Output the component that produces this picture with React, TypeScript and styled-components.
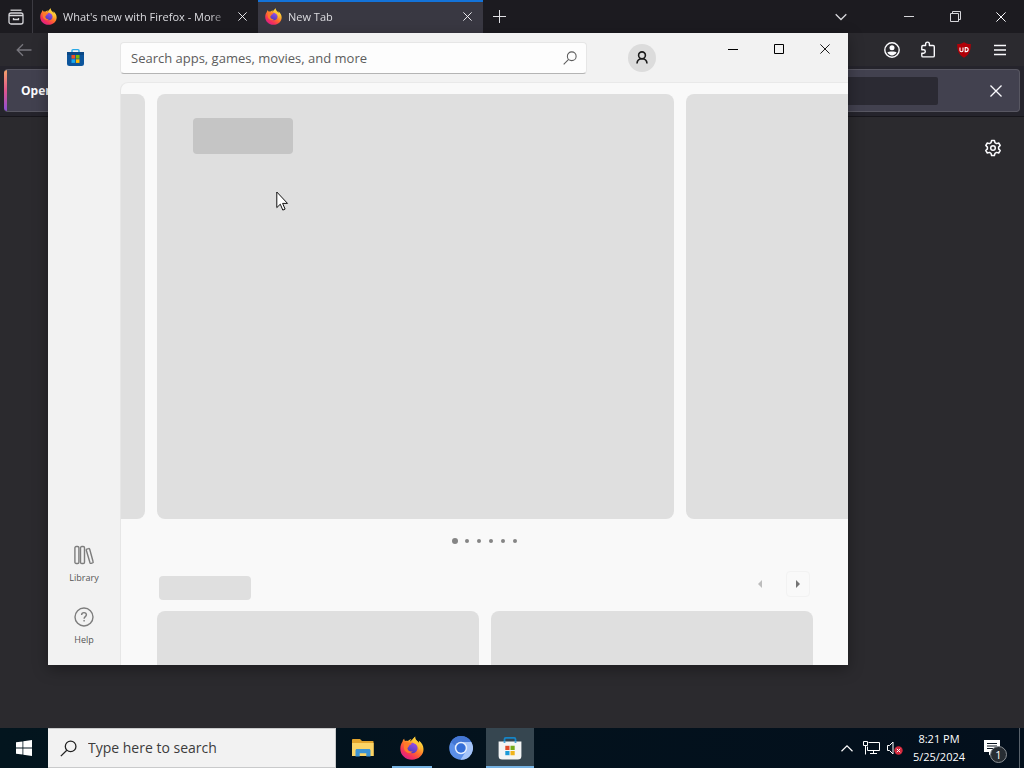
import React from "react";
import styled, { createGlobalStyle } from "styled-components";

const GlobalStyle = createGlobalStyle`
  * { box-sizing: border-box; }
  html, body { margin: 0; padding: 0; }
  body { font-family: "Open Sans", "Noto Sans", sans-serif; background: #2b2a2e; overflow: hidden; }
  button { border: 0; padding: 0; background: none; color: inherit; font: inherit; }
  svg { display: block; flex: none; }
`;

/* ---------- desktop ---------- */

const Desktop = styled.div`
  position: relative;
  display: flex;
  flex-direction: column;
  height: 100vh;
`;

const Browser = styled.main`
  flex: 1;
  display: flex;
  flex-direction: column;
  min-height: 0;
  color: #fbfbfe;
  background: #2b2a2e;
`;

const IconButton = styled.button<{ $w: number }>`
  display: flex;
  align-items: center;
  justify-content: center;
  flex: none;
  width: ${(p) => p.$w}px;
  align-self: stretch;
`;

/* ---------- browser tabs ---------- */

const TabStrip = styled.div`
  display: flex;
  height: 33px;
  background: #1c1b20;
`;

const TabViewButton = styled(IconButton)`
  border-right: 1px solid #3c3b42;
`;

const Tab = styled.div<{ $active?: boolean }>`
  display: flex;
  align-items: center;
  width: 225px;
  padding: 0 4px 2px 7px;
  font-size: 11px;
  border-top: 2px solid ${(p) => (p.$active ? "#1373d9" : "transparent")};
  background: ${(p) => (p.$active ? "#393842" : "transparent")};
`;

const TabTitle = styled.span`
  flex: 1;
  min-width: 0;
  padding-left: 6px;
  overflow: hidden;
  white-space: nowrap;
  color: #dcdce0;
  line-height: 20px;
  mask-image: linear-gradient(to left, transparent, #000 20px);
`;

const Spacer = styled.div`
  flex: 1;
`;

const BrowserControls = styled.div`
  display: flex;
  margin-left: 23px;
`;

const Toolbar = styled.div`
  display: flex;
  height: 33px;
  padding-right: 6px;
  background: #2b2a2f;
`;

const InfoBarArea = styled.div`
  padding: 3px 4px 4px;
  border-bottom: 1px solid #17161b;
  background: #25242c;
`;

const InfoBar = styled.div`
  display: flex;
  align-items: center;
  height: 43px;
  border: 1px solid #585762;
  border-left: 0;
  border-radius: 4px;
  overflow: hidden;
  background: #42414f;
  font-size: 12px;
  font-weight: 700;
  &::before {
    content: "";
    align-self: stretch;
    width: 3px;
    margin-right: 14px;
    background: linear-gradient(#f6a46a, #e0558c 50%, #8a4fd8);
  }
`;

const InfoField = styled.input`
  flex: 1;
  height: 28px;
  margin: 0 35px;
  border: 0;
  border-radius: 2px;
  background: #2b2a33;
`;

const NewTabPage = styled.div`
  flex: 1;
  display: flex;
  justify-content: flex-end;
  align-items: flex-start;
  padding: 15px 15px 0 0;
`;

const SettingsButton = styled.button`
  display: flex;
  align-items: center;
  justify-content: center;
  width: 32px;
  height: 32px;
`;

/* ---------- store window ---------- */

const WindowFrame = styled.div`
  position: absolute;
  top: 33px;
  left: 48px;
  right: 176px;
  bottom: 103px;
  display: flex;
  box-shadow: 0 4px 14px rgba(0, 0, 0, 0.35);
`;

const StoreWindow = styled.section`
  flex: 1;
  min-width: 0;
  display: flex;
  flex-direction: column;
  overflow: hidden;
  background: #f2f2f2;
  color: #1b1b1b;
`;

const TitleBar = styled.header`
  display: flex;
  align-items: center;
  height: 49px;
`;

const StoreLogo = styled.div`
  display: flex;
  width: 72px;
  padding-left: 18px;
`;

const SearchBox = styled.label`
  flex: 0 1 467px;
  display: flex;
  align-items: center;
  height: 32px;
  padding: 0 9px 0 10px;
  border: 1px solid #e6e6e6;
  border-bottom-color: #b4b4b4;
  border-radius: 4px;
  background: #fdfdfd;
`;

const SearchInput = styled.input`
  flex: 1;
  min-width: 0;
  padding: 0;
  border: 0;
  outline: 0;
  background: transparent;
  font-family: inherit;
  font-size: 13px;
  line-height: 20px;
  color: #5c5c5c;
  &::placeholder { color: #5c5c5c; opacity: 1; }
`;

const Avatar = styled.button`
  display: flex;
  align-items: center;
  justify-content: center;
  flex: none;
  width: 28px;
  height: 28px;
  margin-left: 41px;
  border-radius: 50%;
  background: #dcdcdc;
`;

const WindowControls = styled.div`
  display: flex;
  align-self: flex-start;
  height: 32px;
`;

const StoreBody = styled.div`
  flex: 1;
  display: flex;
  min-height: 0;
`;

const SideNav = styled.nav`
  display: flex;
  flex-direction: column;
  justify-content: flex-end;
  gap: 8px;
  width: 72px;
  padding-bottom: 10px;
`;

const SideItem = styled.button`
  display: flex;
  flex-direction: column;
  align-items: center;
  gap: 6px;
  height: 54px;
  padding-top: 6px;
  font-size: 9px;
  line-height: 14px;
  color: #555;
`;

const Page = styled.div`
  flex: 1;
  min-width: 0;
  overflow: hidden;
  padding-top: 11px;
  border-left: 1px solid #e6e6e6;
  border-top: 1px solid #e9e9e9;
  border-top-left-radius: 8px;
  background: #f9f9f9;
`;

const Carousel = styled.div`
  display: flex;
  gap: 12px;
  height: 425px;
`;

const Slide = styled.div`
  flex: 1;
  padding: 24px 36px;
  border-radius: 8px;
  background: #dfdfdf;
`;

const SlideEdge = styled.div<{ $side: "left" | "right" }>`
  flex: none;
  width: ${(p) => (p.$side === "left" ? 24 : 162)}px;
  border-radius: ${(p) => (p.$side === "left" ? "0 8px 8px 0" : "8px 0 0 8px")};
  background: #dfdfdf;
`;

const Placeholder = styled.div<{ $w: number; $h: number; $dark?: boolean }>`
  width: ${(p) => p.$w}px;
  height: ${(p) => p.$h}px;
  border-radius: 4px;
  background: ${(p) => (p.$dark ? "#c5c5c5" : "#dfdfdf")};
`;

const Dots = styled.div`
  display: flex;
  justify-content: center;
  align-items: center;
  height: 44px;
`;

const Dot = styled.button<{ $active?: boolean }>`
  display: flex;
  align-items: center;
  justify-content: center;
  width: 12px;
  height: 12px;
  &::before {
    content: "";
    width: ${(p) => (p.$active ? 6 : 4)}px;
    height: ${(p) => (p.$active ? 6 : 4)}px;
    border-radius: 50%;
    background: #858585;
  }
`;

const SectionHeader = styled.div`
  display: flex;
  align-items: center;
  gap: 14px;
  height: 48px;
  padding: 1px 38px 0;
`;

const Pager = styled.button<{ $disabled?: boolean }>`
  display: flex;
  align-items: center;
  justify-content: center;
  width: 24px;
  height: 26px;
  margin-bottom: 8px;
  border: 1px solid ${(p) => (p.$disabled ? "transparent" : "#f2f2f2")};
  border-radius: 4px;
  color: ${(p) => (p.$disabled ? "#bdbdbd" : "#747474")};
`;

const CardRow = styled.div`
  display: grid;
  grid-template-columns: 1fr 1fr;
  gap: 12px;
  padding: 0 35px 0 36px;
`;

const Card = styled.div`
  height: 180px;
  border-radius: 8px;
  background: #dfdfdf;
`;

/* ---------- taskbar ---------- */

const Taskbar = styled.footer`
  display: flex;
  height: 40px;
  color: #fff;
  background: linear-gradient(to right, #03151e, #030f1c);
`;

const TaskSearch = styled.label`
  display: flex;
  align-items: center;
  flex: 0 1 288px;
  gap: 11px;
  margin-right: 3px;
  padding-left: 12px;
  border: 1px solid #c9cacb;
  border-left-width: 0;
  background: #f2f2f2;
`;

const TaskInput = styled(SearchInput)`
  font-size: 14px;
  color: #3c3c3c;
  &::placeholder { color: #3c3c3c; }
`;

const Apps = styled.div`
  display: flex;
  gap: 1px;
`;

const AppButton = styled.button<{ $state?: "open" | "focused" }>`
  position: relative;
  display: flex;
  align-items: center;
  justify-content: center;
  width: 48px;
  background: ${(p) => (p.$state === "focused" ? "#364650" : "transparent")};
  &::after {
    content: "";
    position: absolute;
    bottom: 0;
    left: ${(p) => (p.$state === "focused" ? 0 : 4)}px;
    right: ${(p) => (p.$state === "focused" ? 0 : 4)}px;
    height: ${(p) => (p.$state ? 2 : 0)}px;
    background: #76b2e2;
  }
`;

const Clock = styled.time`
  display: flex;
  flex-direction: column;
  justify-content: center;
  align-items: center;
  width: 66px;
  font-size: 11px;
  line-height: 18px;
`;

const Notifications = styled(IconButton)`
  position: relative;
  padding-right: 8px;
`;

const Badge = styled.span`
  position: absolute;
  left: 18px;
  top: 18px;
  width: 17px;
  height: 17px;
  border: 1px solid #8b9095;
  border-radius: 50%;
  background: #272d33;
  font-size: 11px;
  line-height: 15px;
  text-align: center;
`;

const ShowDesktop = styled.button`
  width: 5px;
  border-left: 1px solid #59626b;
`;

const Cursor = styled.svg`
  position: absolute;
  left: 276px;
  top: 191px;
`;

/* ---------- drawings ---------- */

const Cross = ({ size = 10, w = 1 }: { size?: number; w?: number }) => (
  <svg width={size} height={size} viewBox="0 0 10 10" fill="none" stroke="currentColor" strokeWidth={w}>
    <path d="M.4.4l9.2 9.2M9.6.4L.4 9.6" />
  </svg>
);

const Magnifier = ({ size, color }: { size: number; color: string }) => (
  <svg width={size} height={size} viewBox="0 0 16 16" fill="none" stroke={color} strokeWidth="1.2">
    <circle cx="10" cy="6" r="5" />
    <path d="M6.4 9.6L.8 15.2" />
  </svg>
);

const FirefoxLogo = ({ size, id }: { size: number; id: string }) => (
  <svg width={size} height={size} viewBox="0 0 24 24">
    <defs>
      <linearGradient id={id + "a"} x1="0.85" y1="0.05" x2="0.2" y2="0.95">
        <stop offset="0" stopColor="#fff44f" />
        <stop offset=".3" stopColor="#ffb52e" />
        <stop offset=".55" stopColor="#ff6b2d" />
        <stop offset=".8" stopColor="#f5315c" />
        <stop offset="1" stopColor="#d9218c" />
      </linearGradient>
      <linearGradient id={id + "b"} x1="0.7" y1="0" x2="0.3" y2="1">
        <stop offset="0" stopColor="#9a4fe8" />
        <stop offset="1" stopColor="#4b3bb8" />
      </linearGradient>
    </defs>
    <path fill={`url(#${id}a)`} d="M15.2.5c-.3 2.1.5 3.3 2 4.5 1 .7 1.5 1.5 1.8 2.4.2-.8.1-1.900-.3-2.800 3 2.100 4.700 5 4.800 8.400C23.700 19 18.500 23.700 12 23.700S.3 19 .3 12.700c0-3.200 1-5.300 2.200-7 .2-1.200.8-2.300 1.700-3 0 1 .3 1.700.8 2.300 1-.3 2.100-.3 3 0 .9-1 2.100-1.700 3.400-1.900-.7.7-1.200 1.500-1.300 2.400 1.600-1.300 3.100-2.700 5.100-5z" />
    <circle cx="12.300" cy="12" r="5.300" fill={`url(#${id}b)`} />
    <path fill="#ff7a2a" d="M4.800 6.500c1.400-.7 2.900-.5 4 .3 1.200.1 2.500.1 3 .5-.3 1.300-2 1.700-2.700 2.300-.2 1.500-1.500 1.700-1.700 3 .6 2.400 3 3.500 5.400 2.600-2.400 3.400-8 1.800-8.800-2.700-.3-2.200-.2-4.300.8-6z" />
    <path fill="#ffc936" d="M15.200.5c-.3 2.100.5 3.300 2 4.500 3 2.200 3.600 6.300 2 9.500-.1-3.600-2.300-6-5.700-7.600-1.600-1-.9-4 1.700-6.400z" opacity=".75" />
  </svg>
);

const StoreBlueLogo = () => (
  <svg width="19" height="19" viewBox="0 0 19 19">
    <path d="M6 4V2.600c0-.6.4-1 1-1h5c.6 0 1 .4 1 1V4" fill="none" stroke="#29a9e6" strokeWidth="1.400" />
    <path d="M1 4h17v11.500a2.500 2.500 0 0 1-2.500 2.500h-12A2.500 2.500 0 0 1 1 15.500z" fill="#0c559c" />
    <path d="M1 4h17v3H1z" fill="#0a4886" />
    <path d="M5.500 7h3.600v3.600H5.500z" fill="#f25022" />
    <path d="M9.900 7h3.600v3.600H9.900z" fill="#7fba00" />
    <path d="M5.500 11.300h3.600v3.600H5.500z" fill="#16a9ee" />
    <path d="M9.900 11.300h3.600v3.600H9.900z" fill="#ffb900" />
  </svg>
);

const StoreTaskLogo = () => (
  <svg width="24" height="24" viewBox="0 0 24 24">
    <path d="M6.500 7V3.200c0-.8.500-1.300 1.300-1.300h8.400c.8 0 1.300.5 1.300 1.300V7" fill="none" stroke="#1685c6" strokeWidth="1.800" />
    <path d="M.6 5.500h22.800V20a3.500 3.500 0 0 1-3.500 3.500H4.100A3.500 3.500 0 0 1 .6 20z" fill="#f4f5f5" />
    <path d="M6.500 5.500v1.300M17.500 5.500v1.300" stroke="#1685c6" strokeWidth="1.800" />
    <path d="M7.300 9.800h4.200V14H7.300z" fill="#e04b2a" />
    <path d="M12.500 9.800h4.200V14h-4.200z" fill="#76ab1a" />
    <path d="M7.300 15h4.200v4.200H7.300z" fill="#1d9bd8" />
    <path d="M12.500 15h4.200v4.200h-4.200z" fill="#f0b41b" />
  </svg>
);

const ChromiumLogo = () => (
  <svg width="24" height="24" viewBox="0 0 24 24">
    <circle cx="12" cy="12" r="11.800" fill="#5b8fe8" />
    <path d="M12 6h10.300A11.800 11.800 0 0 1 11.500 23.800L17.200 15z" fill="#a5c4f8" />
    <path d="M1.800 6A11.800 11.800 0 0 1 22.300 6H12a6 6 0 0 0-5.500 4z" fill="#4477d4" />
    <circle cx="12" cy="12" r="6.200" fill="#e4edfc" />
    <circle cx="12" cy="12" r="4.700" fill="#356fd8" />
  </svg>
);

const ExplorerLogo = () => (
  <svg width="24" height="20" viewBox="0 0 24 20">
    <path d="M1 2.200C1 1.500 1.400 1 2 1h7l2 2h10.500c.7 0 1.100.4 1.100 1v14H1z" fill="#e3a52d" />
    <path d="M1 5h21.600v13H1z" fill="#fbd466" />
    <path d="M4.500 18.500v-6c0-.9.600-1.500 1.500-1.500h12c.9 0 1.500.6 1.500 1.500v6h-4.200v-3.300H8.700v3.300z" fill="#3d94d4" />
  </svg>
);

const Gear = () => (
  <svg width="18" height="18" viewBox="0 0 18 18" fill="none" stroke="#fbfbfe" strokeWidth="1.500" strokeLinejoin="round">
    <path d="M7.600 1.500h2.800l.6 2.200 1.500.9 2.200-.6 1.500 2.500L14.600 8.100v1.800l1.600 1.600-1.500 2.500-2.200-.6-1.500.9-.6 2.200H7.600L7 14.300l-1.500-.9-2.200.6-1.500-2.500 1.600-1.600V8.100L1.800 6.500 3.300 4l2.200.6L7 3.700z" />
    <circle cx="9" cy="9" r="2.300" />
  </svg>
);

export default function App() {
  return (
    <Desktop>
      <GlobalStyle />
      <Browser>
        <TabStrip>
          <TabViewButton $w={33} aria-label="Recent browsing">
            <svg width="16" height="16" viewBox="0 0 16 16" fill="none" stroke="#d6d6da" strokeWidth="1.300">
              <path d="M2.500 1.200h11" />
              <rect x="1" y="4" width="14" height="11" rx="2" />
              <path d="M1 6.500h14M5.500 9v1.500h5V9" />
            </svg>
          </TabViewButton>
          <Tab>
            <FirefoxLogo size={17} id="t1" />
            <TabTitle>What's new with Firefox - More</TabTitle>
            <IconButton $w={24} aria-label="Close tab"><Cross size={9} /></IconButton>
          </Tab>
          <Tab $active>
            <FirefoxLogo size={17} id="t2" />
            <TabTitle>New Tab</TabTitle>
            <IconButton $w={24} aria-label="Close tab"><Cross size={9} /></IconButton>
          </Tab>
          <IconButton $w={33} aria-label="Open a new tab">
            <svg width="13" height="13" viewBox="0 0 13 13" stroke="#e2e2e6"><path d="M6.500 0v13M0 6.500h13" /></svg>
          </IconButton>
          <Spacer />
          <IconButton $w={44} aria-label="List all tabs">
            <svg width="12" height="8" viewBox="0 0 12 8" fill="none" stroke="#d6d6da" strokeWidth="1.300"><path d="M.7 1.200L6 6.500l5.300-5.300" /></svg>
          </IconButton>
          <BrowserControls>
            <IconButton $w={46} aria-label="Minimize">
              <svg width="10" height="10" viewBox="0 0 10 10" stroke="#d6d6da"><path d="M0 4.500h10" /></svg>
            </IconButton>
            <IconButton $w={46} aria-label="Restore">
              <svg width="11" height="11" viewBox="0 0 11 11" fill="none" stroke="#d6d6da"><path d="M.5 2.500h8v8h-8zM2.500 2.500v-2h8v8h-2" /></svg>
            </IconButton>
            <IconButton $w={46} aria-label="Close"><Cross /></IconButton>
          </BrowserControls>
        </TabStrip>
        <Toolbar>
          <IconButton $w={48} aria-label="Back">
            <svg width="16" height="14" viewBox="0 0 16 14" fill="none" stroke="#77767d" strokeWidth="1.300"><path d="M15.500 7H1.500M7 1.200L1.200 7 7 12.800" /></svg>
          </IconButton>
          <Spacer />
          <IconButton $w={36} aria-label="Account">
            <svg width="16" height="16" viewBox="0 0 16 16">
              <circle cx="8" cy="8" r="7.200" fill="none" stroke="#fbfbfe" strokeWidth="1.400" />
              <circle cx="8" cy="5.800" r="2.500" fill="#fbfbfe" />
              <path d="M3.400 10.600c1.300-1.400 7.900-1.400 9.200 0-1 1.900-2.700 2.800-4.600 2.800s-3.600-.9-4.600-2.800z" fill="#fbfbfe" />
            </svg>
          </IconButton>
          <IconButton $w={36} aria-label="Extensions">
            <svg width="16" height="17" viewBox="0 0 16 17" fill="none" stroke="#fbfbfe" strokeWidth="1.400" strokeLinejoin="round">
              <path d="M5.600 4.500V3a1.900 1.900 0 0 1 3.800 0v1.500h3.700c.7 0 1.200.5 1.200 1.200v9c0 .7-.5 1.200-1.200 1.200H3c-.7 0-1.200-.5-1.200-1.200v-2.500h1.800a1.700 1.700 0 0 0 0-3.400H1.800V5.700c0-.7.5-1.200 1.200-1.200z" />
            </svg>
          </IconButton>
          <IconButton $w={36} aria-label="uBlock Origin">
            <svg width="16" height="16" viewBox="0 0 16 16">
              <path d="M8 .3c2 1.300 4 1.800 6.800 1.800 0 7-1.500 10.500-6.800 13.600C2.700 12.600 1.200 9.100 1.200 2.100 4 2.100 6 1.600 8 .3z" fill="#b00008" />
              <path d="M4 5.500v3c0 1.600 3 1.600 3 0v-3M9.200 9.600v-4h1c2.600 0 2.600 4 0 4z" fill="none" stroke="#fff" strokeWidth="1.100" />
            </svg>
          </IconButton>
          <IconButton $w={36} aria-label="Application menu">
            <svg width="12" height="12" viewBox="0 0 12 12" stroke="#fbfbfe" strokeWidth="1.300"><path d="M0 1.500h12M0 6h12M0 10.500h12" /></svg>
          </IconButton>
        </Toolbar>
        <InfoBarArea>
          <InfoBar>
            <span>Open previous tabs?</span>
            <InfoField aria-label="Restore previous session" />
            <IconButton $w={46} aria-label="Dismiss"><Cross size={12} w={1.1} /></IconButton>
          </InfoBar>
        </InfoBarArea>
        <NewTabPage>
          <SettingsButton aria-label="Personalize new tab"><Gear /></SettingsButton>
        </NewTabPage>
      </Browser>

      <WindowFrame>
        <StoreWindow aria-label="Microsoft Store">
          <TitleBar>
            <StoreLogo><StoreBlueLogo /></StoreLogo>
            <SearchBox>
              <SearchInput type="text" aria-label="Search" placeholder="Search apps, games, movies, and more" />
              <Magnifier size={14} color="#5c5c5c" />
            </SearchBox>
            <Avatar aria-label="Account">
              <svg width="12" height="13" viewBox="0 0 12 13" fill="none" stroke="#1b1b1b" strokeWidth="1.600">
                <circle cx="6" cy="4.300" r="3.400" />
                <path d="M1 12.500C1.200 9.300 3 7.700 6 7.700s4.800 1.600 5 4.800" />
              </svg>
            </Avatar>
            <Spacer />
            <WindowControls>
              <IconButton $w={46} aria-label="Minimize">
                <svg width="10" height="10" viewBox="0 0 10 10" stroke="#000"><path d="M0 5.500h10" /></svg>
              </IconButton>
              <IconButton $w={46} aria-label="Maximize">
                <svg width="10" height="10" viewBox="0 0 10 10" fill="none" stroke="#000"><path d="M.5.5h9v9h-9z" /></svg>
              </IconButton>
              <IconButton $w={46} aria-label="Close"><Cross size={10} /></IconButton>
            </WindowControls>
          </TitleBar>
          <StoreBody>
            <SideNav>
              <SideItem>
                <svg width="20" height="20" viewBox="0 0 20 20" fill="none" stroke="#7d7d7d" strokeWidth="1.400">
                  <rect x=".9" y="1.500" width="4" height="17" rx="1.300" />
                  <rect x="6.500" y="1.500" width="4" height="17" rx="1.300" />
                  <path d="M12.800 4.200l1.800-.6c.5-.2.9 0 1.100.6l3.400 12.500c.2.600 0 1-.6 1.200l-1.300.4c-.6.200-1 0-1.200-.6L12.300 5.300c-.1-.5 0-.9.500-1.100z" />
                </svg>
                Library
              </SideItem>
              <SideItem>
                <svg width="20" height="20" viewBox="0 0 20 20" fill="none" stroke="#7d7d7d" strokeWidth="1.400">
                  <circle cx="10" cy="10" r="9" />
                  <path d="M7.600 8c0-1.500 1-2.400 2.400-2.400s2.400.9 2.400 2.200c0 1.800-2.300 1.900-2.300 4M10.100 13v1.500" />
                </svg>
                Help
              </SideItem>
            </SideNav>
            <Page>
              <Carousel>
                <SlideEdge $side="left" />
                <Slide><Placeholder $w={100} $h={36} $dark /></Slide>
                <SlideEdge $side="right" />
              </Carousel>
              <Dots>
                {[0, 1, 2, 3, 4, 5].map((i) => (
                  <Dot key={i} $active={i === 0} aria-label={`Slide ${i + 1}`} />
                ))}
              </Dots>
              <SectionHeader>
                <Placeholder $w={92} $h={24} />
                <Spacer />
                <Pager $disabled disabled aria-label="Previous">
                  <svg width="4" height="8" viewBox="0 0 4 8" fill="currentColor"><path d="M4 0v8L0 4z" /></svg>
                </Pager>
                <Pager aria-label="Next">
                  <svg width="4" height="8" viewBox="0 0 4 8" fill="currentColor"><path d="M0 0v8l4-4z" /></svg>
                </Pager>
              </SectionHeader>
              <CardRow>
                <Card />
                <Card />
              </CardRow>
            </Page>
          </StoreBody>
        </StoreWindow>
      </WindowFrame>

      <Taskbar>
        <IconButton $w={48} aria-label="Start">
          <svg width="16" height="16" viewBox="0 0 16 16" fill="#fff">
            <path d="M0 2.300l6.500-.9v6.200H0zM7.300 1.300L16 0v7.600H7.300zM0 8.400h6.500v6.200L0 13.700zM7.300 8.400H16V16l-8.700-1.300z" />
          </svg>
        </IconButton>
        <TaskSearch>
          <Magnifier size={17} color="#222" />
          <TaskInput type="text" aria-label="Search Windows" placeholder="Type here to search" />
        </TaskSearch>
        <Apps>
          <AppButton aria-label="File Explorer"><ExplorerLogo /></AppButton>
          <AppButton $state="open" aria-label="Firefox"><FirefoxLogo size={24} id="tb" /></AppButton>
          <AppButton aria-label="Chromium"><ChromiumLogo /></AppButton>
          <AppButton $state="focused" aria-label="Microsoft Store"><StoreTaskLogo /></AppButton>
        </Apps>
        <Spacer />
        <IconButton $w={24} aria-label="Show hidden icons">
          <svg width="12" height="7" viewBox="0 0 12 7" fill="none" stroke="#fff" strokeWidth="1.200"><path d="M.5 6.300L6 .9l5.500 5.400" /></svg>
        </IconButton>
        <IconButton $w={24} aria-label="Network">
          <svg width="17" height="14" viewBox="0 0 17 14" fill="none" stroke="#fff">
            <path d="M5.500 1.500h11v8h-12v-4M.5.500h4v4h-4zM2.500 4.500v9M10.500 9.500v3M7 12.500h7" />
          </svg>
        </IconButton>
        <IconButton $w={23} aria-label="Volume">
          <svg width="16" height="14" viewBox="0 0 16 14">
            <path d="M.5 4.500h2l3.500-3.500v12L2.500 9.500h-2z" fill="none" stroke="#fff" />
            <circle cx="11.500" cy="9.500" r="4.200" fill="#d5283c" />
            <path d="M9.800 7.800l3.400 3.400M13.200 7.800l-3.400 3.400" stroke="#fff" />
          </svg>
        </IconButton>
        <Clock>
          <span>8:21 PM</span>
          <span>5/25/2024</span>
        </Clock>
        <Notifications $w={47} aria-label="Notifications">
          <svg width="16" height="16" viewBox="0 0 16 16">
            <path d="M0 0h16v12H8.500l-3.500 3.500V12H0z" fill="#fff" />
            <path d="M3 3.500h10M3 6h10M3 8.500h7" stroke="#0a1420" />
          </svg>
          <Badge>1</Badge>
        </Notifications>
        <ShowDesktop aria-label="Show desktop" />
      </Taskbar>

      <Cursor width="13" height="21" viewBox="0 0 13 21" aria-hidden="true">
        <path d="M.8 1v15.600l3.500-3.400 2.500 5.900 2.300-1-2.500-5.700h4.900z" fill="#fff" stroke="#111" strokeWidth="1" />
      </Cursor>
    </Desktop>
  );
}
